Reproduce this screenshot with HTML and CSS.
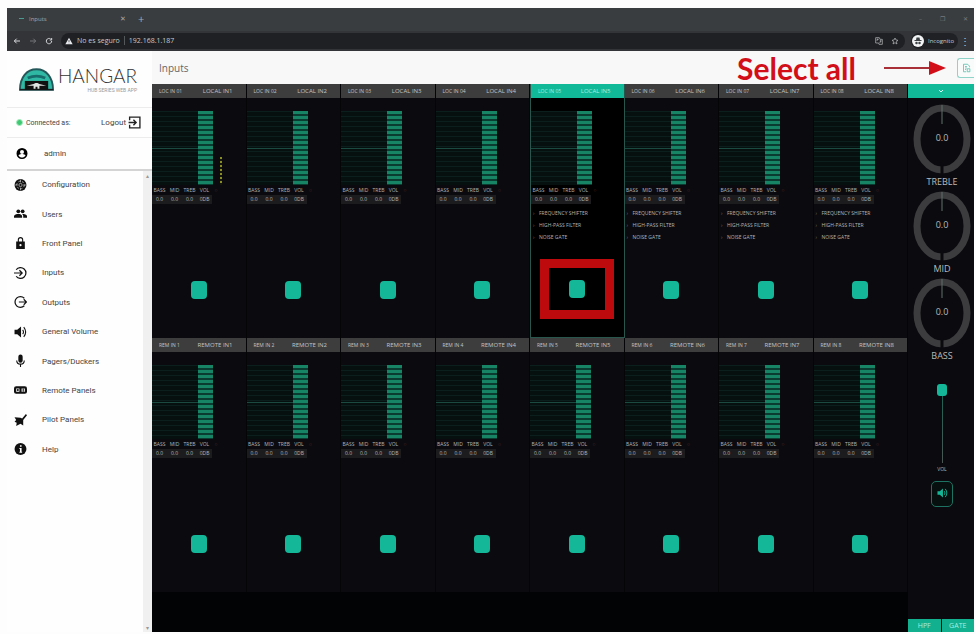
FILE: index.html
```
<!DOCTYPE html>
<html lang="en">
<head>
    <meta charset="UTF-8">
    <meta name="viewport" content="width=device-width, initial-scale=1.0">
    <title>Inputs</title>
    <link rel="stylesheet" href="styles.css">
</head>
<body>
    <div class="window">
        <!-- Browser bar -->
        <div class="tabs">
            <span class="tab-dash"></span>
            <span class="tab-title">Inputs</span>
            <span class="tab-close">✕</span>
            <span class="tab-new">+</span>
            <span class="win-buttons"><span>–</span><span>❐</span><span>✕</span></span>
        </div>
        <div class="toolbar">
            <svg class="nav-icon" viewBox="0 0 24 24"><path d="M21 12H4M11 5l-7 7 7 7"/></svg>
            <svg class="nav-icon dim" viewBox="0 0 24 24"><path d="M3 12h17M13 5l7 7-7 7"/></svg>
            <svg class="nav-icon" viewBox="0 0 24 24"><path d="M20 12a8 8 0 1 1-3-6M20 3v6h-6"/></svg>
            <div class="address">
                <svg class="warn" viewBox="0 0 24 24"><path d="M12 2L1 22h22zM11 9h2v6h-2zM11 17h2v2h-2z"/></svg>
                <span>No es seguro</span>
                <span class="bar"></span>
                <span>192.168.1.187</span>
                <svg class="addr-icon push" viewBox="0 0 24 24"><path d="M2 2h11l2 5h7v15H12l-1-4H2zM5 7h6M8 5c0 4-2 6-3 7M14 12h6M17 10c0 4-1 6-3 8"/></svg>
                <svg class="addr-icon" viewBox="0 0 24 24"><path d="M12 3l3 6 6 1-5 4 2 7-6-4-6 4 2-7-5-4 6-1z"/></svg>
            </div>
            <div class="incognito">
                <svg viewBox="0 0 24 24"><circle cx="12" cy="12" r="12" fill="#f1f3f4"/><path d="M8 10l1-5h6l1 5zM5 10h14v2H5z" fill="#3c4043"/><circle cx="9" cy="16" r="2.5" fill="#3c4043"/><circle cx="15" cy="16" r="2.5" fill="#3c4043"/></svg>
                <span>Incognito</span>
            </div>
            <span class="dots">⋮</span>
        </div>

        <div class="app">
            <!-- Sidebar -->
            <div class="sidebar">
                <div class="logo">
                    <svg class="logo-mark" viewBox="0 0 36 23">
                        <path d="M1 22C1 9 8 1 18 1s17 8 17 21z" fill="#2fb9a4" stroke="#24575a" stroke-width="2"/>
                        <path d="M9 10q9-4 18 0" fill="none" stroke="#176b6b" stroke-width="3"/>
                        <path d="M6 13h24v9H6z" fill="#111"/>
                        <path d="M8 18l7-2 2-1h2l2 1 7 2-7 0v3h-2v-2h-2v2h-2v-3z" fill="#dfe5e3"/>
                        <path d="M1 22h34" stroke="#111" stroke-width="1"/>
                    </svg>
                    <div class="logo-text">
                        <div class="logo-name">HANGAR</div>
                        <div class="logo-sub">HUB SERIES WEB APP</div>
                    </div>
                </div>
                <div class="connected">
                    <span class="status"></span>
                    <span>Connected as:</span>
                    <a class="logout" href="#">Logout
                        <svg viewBox="0 0 24 24"><path d="M3 8V2h19v20H3v-6M1 12h14M10 7l5 5-5 5" fill="none" stroke="#222" stroke-width="2.5"/></svg>
                    </a>
                </div>
                <div class="user">
                    <svg viewBox="0 0 24 24"><path d="M12 1a11 11 0 1 0 0 22 11 11 0 0 0 0-22zm0 4a4 4 0 1 1 0 8 4 4 0 0 1 0-8zm0 15c-3 0-5-1-7-4 0-2 5-3 7-3s7 1 7 3c-2 3-4 4-7 4z"/></svg>
                    <span>admin</span>
                </div>
                <div class="menu-scroll">
                    <ul class="menu">
                        <li><a href="#"><svg viewBox="0 0 24 24"><circle cx="12" cy="12" r="11"/><circle cx="12" cy="12" r="7" fill="none" stroke="#fff" stroke-dasharray="4 3"/><circle cx="12" cy="12" r="3" fill="none" stroke="#fff"/><path d="M12 2v5M12 17v5M2 12h5M17 12h5" stroke="#fff"/></svg>Configuration</a></li>
                        <li><a href="#"><svg viewBox="0 0 24 24"><circle cx="8" cy="7" r="3.5"/><circle cx="16" cy="7" r="3.5"/><path d="M0 19v-3c0-3 5-4 8-4s7 1 7 4v3zM17 19v-3c0-2-1-3-2-4 4 0 9 1 9 4v3z"/></svg>Users</a></li>
                        <li><a href="#"><svg viewBox="0 0 24 24"><path d="M4 9h16v14H4zM12 14a2 2 0 1 0 0 4 2 2 0 0 0 0-4z" fill-rule="evenodd"/><path d="M8 10V6a4 4 0 0 1 8 0v4" fill="none" stroke="#111" stroke-width="2"/></svg>Front Panel</a></li>
                        <li><a href="#"><svg viewBox="0 0 24 24"><path d="M4 6a10 10 0 1 1 0 12M0 12h15M10 7l5 5-5 5" fill="none" stroke="#111" stroke-width="2.3"/></svg>Inputs</a></li>
                        <li><a href="#"><svg viewBox="0 0 24 24"><path d="M19 5a10 10 0 1 0 0 14M9 12h14M18 7l5 5-5 5" fill="none" stroke="#111" stroke-width="2.3"/></svg>Outputs</a></li>
                        <li><a href="#"><svg viewBox="0 0 24 24"><path d="M1 8v8h5l7 6V2L6 8z"/><path d="M16 8q3 4 0 8M18 3q7 9 0 18" fill="none" stroke="#111" stroke-width="2"/></svg>General Volume</a></li>
                        <li><a href="#"><svg viewBox="0 0 24 24"><rect x="8" y="0" width="8" height="15" rx="4"/><path d="M5 11c0 9 14 9 14 0M12 17v6" fill="none" stroke="#111" stroke-width="2"/></svg>Pagers/Duckers</a></li>
                        <li><a href="#"><svg viewBox="0 0 24 24"><rect x="0" y="5" width="24" height="14" rx="4"/><path d="M4 9h6v6H4zM14 9h6v6h-6z" fill="#fff"/><circle cx="7" cy="12" r="2"/><path d="M16 9h2v6h-2z"/></svg>Remote Panels</a></li>
                        <li><a href="#"><svg viewBox="0 0 24 24"><path d="M1 7l11 1 3 1 7-8 2 2-7 9 0 10-5-3-8 4 1-6-4-2 3-3z"/></svg>Pilot Panels</a></li>
                        <li><a href="#"><svg viewBox="0 0 24 24"><circle cx="12" cy="12" r="11"/><path d="M11 5h3v3h-3zM10 10h4v7h1v2h-5v-2h1v-5h-1z" fill="#fff"/></svg>Help</a></li>
                    </ul>
                    <div class="scrollbar"><span>▴</span><span>▾</span></div>
                </div>
            </div>

            <!-- Main -->
            <div class="main">
                <div class="title-bar">
                    <h1>Inputs</h1>
                    <div class="note">
                        <span>Select all</span>
                        <svg viewBox="0 0 62 16"><path d="M0 8h46" stroke="#a93036" stroke-width="2"/><path d="M45 1l17 7-17 7z" fill="#d20f18"/></svg>
                    </div>
                    <button class="select-all" type="button" aria-label="Select all">
                        <svg viewBox="0 0 24 24"><path d="M20 10V7l-5-5H4v20h7M8 8h5M8 12h5M8 16h3M14 14h7v8h-7z"/></svg>
                    </button>
                </div>
                <div class="mixer">
                    <div class="racks">
                        <div class="rack" id="local"></div>
                        <div class="rack" id="remote"></div>
                    </div>
                    <div class="controls">
                        <button class="collapse" type="button" aria-label="Collapse">
                            <svg viewBox="0 0 10 6"><path d="M3 2l2 2 2-2"/></svg>
                        </button>
                        <div id="knobs"></div>
                        <input class="volume" id="volume" type="range" min="0" max="100" value="100">
                        <label class="volume-label" for="volume">VOL</label>
                        <button class="mute" type="button" aria-label="Mute">
                            <svg viewBox="0 0 24 24"><path d="M1 8v8h5l7 6V2L6 8z" fill="#16b596"/><path d="M16 8q3 4 0 8M18 3q7 9 0 18" fill="none" stroke="#16b596" stroke-width="2"/></svg>
                        </button>
                        <div class="filters">
                            <button type="button">HPF</button>
                            <button type="button">GATE</button>
                        </div>
                    </div>
                </div>
            </div>
        </div>
    </div>
    <script src="script.js"></script>
</body>
</html>
```
FILE: styles.css
```
* {
    box-sizing: border-box;
}
body {
    margin: 0;
    background: #fdfdfd;
    font-family: "Open Sans", "Noto Sans", sans-serif;
    color: #444;
}
button {
    padding: 0;
    border: 0;
    font-family: inherit;
    cursor: pointer;
}
a {
    color: inherit;
    text-decoration: none;
}
.window {
    display: flex;
    flex-direction: column;
    min-height: 100vh;
    padding: 8px 2px 2px 7px;
}

/* Browser bar */
.tabs {
    display: flex;
    align-items: center;
    height: 23px;
    padding: 0 6px 2px 12px;
    background: #3a3d40;
    color: #a5a8aa;
    font-size: 6px;
}
.tab-dash {
    width: 5px;
    height: 1px;
    margin-right: 5px;
    background: #4c9a90;
}
.tab-title {
    width: 91px;
}
.tab-close {
    width: 18px;
    font-size: 7px;
}
.tab-new {
    font-size: 11px;
}
.win-buttons {
    display: flex;
    gap: 18px;
    margin-left: auto;
    color: #777a7d;
}
.toolbar {
    display: flex;
    align-items: center;
    height: 20px;
    padding: 0 4px 1px 6px;
    background: #323438;
    color: #c6c8ca;
    font-size: 7px;
}
.toolbar span {
    white-space: nowrap;
}
.nav-icon {
    width: 8px;
    height: 8px;
    margin-right: 8px;
    fill: none;
    stroke: #d5d7d9;
    stroke-width: 3;
}
.dim {
    opacity: 0.4;
}
.address {
    flex: 1;
    display: flex;
    align-items: center;
    height: 16px;
    padding: 0 6px 0 4px;
    border-radius: 8px;
    background: #1f2023;
}
.warn {
    width: 8px;
    height: 8px;
    margin-right: 4px;
    fill: #e8eaed;
    fill-rule: evenodd;
}
.bar {
    width: 1px;
    height: 9px;
    margin: 0 4px;
    background: #55585b;
}
.addr-icon {
    width: 8px;
    height: 8px;
    margin-left: 8px;
    fill: none;
    stroke: #c0c2c4;
    stroke-width: 2;
}
.push {
    margin-left: auto;
}
.incognito {
    display: flex;
    align-items: center;
    gap: 4px;
    height: 16px;
    padding: 0 4px 0 1px;
    margin-left: 6px;
    border-radius: 8px;
    background: #202124;
    font-size: 6px;
}
.incognito svg {
    width: 12px;
    height: 12px;
}
.dots {
    margin-left: 2px;
    font-size: 10px;
}

/* Sidebar */
.app {
    flex: 1;
    display: flex;
}
.sidebar {
    display: flex;
    flex-direction: column;
    width: 145px;
    background: #fefefe;
    font-family: Roboto, sans-serif;
    font-size: 8px;
}
.logo {
    display: flex;
    gap: 4px;
    height: 57px;
    padding: 13px 0 0 12px;
    border-bottom: 1px solid #ececec;
}
.logo-mark {
    width: 35px;
    height: 23px;
    margin-top: 4px;
}
.logo-name {
    font-family: Lato, sans-serif;
    font-weight: 300;
    font-size: 19px;
    line-height: 23px;
    color: #333;
}
.logo-sub {
    font-size: 5px;
    line-height: 6px;
    text-align: right;
    color: #999;
}
.connected {
    display: flex;
    align-items: center;
    height: 30px;
    padding: 0 11px 0 9px;
    border-bottom: 1px solid #ececec;
    font-size: 7px;
}
.status {
    width: 7px;
    height: 7px;
    margin-right: 3px;
    border: 1px solid #a7ecc0;
    border-radius: 50%;
    background: #3fc872;
}
.logout {
    display: flex;
    align-items: center;
    gap: 2px;
    margin-left: auto;
    font-size: 8px;
}
.logout svg {
    width: 13px;
    height: 13px;
}
.user {
    display: flex;
    align-items: center;
    gap: 16px;
    height: 33px;
    border-bottom: 2px solid #d4d4d4;
    padding-left: 9px;
}
.user svg {
    width: 12px;
    height: 13px;
}
.menu-scroll {
    flex: 1;
    display: flex;
}
.menu {
    flex: 1;
    display: grid;
    grid-auto-rows: 1fr;
    height: 294px;
    margin: 0;
    padding: 0 0 0 7px;
    list-style: none;
}
.menu a {
    display: flex;
    align-items: center;
    gap: 15px;
    height: 100%;
    padding-bottom: 2px;
}
.menu svg {
    width: 13px;
    height: 14px;
    fill: #111;
}
.scrollbar {
    display: flex;
    flex-direction: column;
    justify-content: space-between;
    align-items: center;
    width: 9px;
    background: #f0f0f0;
    font-size: 6px;
    line-height: 9px;
    color: #999;
}

/* Main */
.main {
    flex: 1;
    display: flex;
    flex-direction: column;
}
.title-bar {
    display: flex;
    align-items: center;
    height: 33px;
    padding-left: 7px;
    background: #f8f8f8;
}
.title-bar h1 {
    margin: 0;
    font-size: 10px;
    font-weight: normal;
    color: #666;
}
.note {
    display: flex;
    align-items: center;
    gap: 28px;
    margin-left: auto;
    font-family: Lato, sans-serif;
    font-weight: bold;
    font-size: 30px;
    line-height: 30px;
    color: #d20f18;
}
.note svg {
    width: 62px;
    height: 16px;
}
.select-all {
    width: 17px;
    height: 20px;
    margin-left: 11px;
    border: 1px solid #8fd3c8;
    border-right: 0;
    border-radius: 3px 0 0 3px;
    background: #f8fbfa;
}
.select-all svg {
    width: 9px;
    height: 10px;
    fill: none;
    stroke: #4fb9a8;
    stroke-width: 2;
}
.mixer {
    flex: 1;
    display: flex;
    background: #010305;
}
.racks {
    flex: 1;
}
.rack {
    display: grid;
    grid-template-columns: repeat(8, 1fr);
}
.channel {
    display: flex;
    flex-direction: column;
    height: 254px;
    border-right: 1px solid #050507;
    background: #0b0b0f;
    color: #b5b5b5;
}
.channel-head {
    display: flex;
    align-items: center;
    justify-content: space-between;
    height: 14px;
    padding: 0 13px 0 7px;
    background: #3d3d3e;
    color: #c4c4c4;
    font-size: 6px;
    white-space: nowrap;
}
.channel-id {
    font-size: 5px;
}
.selected {
    border: 1px solid #28564c;
    border-top: 0;
    background: #000;
}
.selected .channel-head {
    background: #12b998;
    color: #a5efe0;
}
.eq {
    display: flex;
    height: 74px;
    margin-top: 13px;
}
.graph {
    position: relative;
    width: 46px;
    background: repeating-linear-gradient(#0b1f1c 0 1px, #06100f 1px 5px);
}
.graph::after {
    content: "";
    position: absolute;
    top: 50%;
    left: 0;
    width: 100%;
    height: 1px;
    background: #1b4a40;
}
.level {
    width: 15px;
    background: repeating-linear-gradient(#188466 0 3px, #0a3c32 3px 5px);
}
.meter {
    align-self: flex-end;
    width: 2px;
    height: 28px;
    margin-left: 7px;
    background: repeating-linear-gradient(#8a8f22 0 2px, #15170a 2px 4px);
}
.bands {
    width: 68px;
    margin-top: 1px;
    border-collapse: collapse;
    table-layout: fixed;
    font-size: 5px;
    line-height: 9px;
    text-align: center;
}
.bands th, .bands td {
    width: 15px;
    padding: 0;
    font-weight: normal;
}
.bands td {
    background: #1c1c1f;
}
.bands .link {
    width: 8px;
    background: none;
    color: #6b3030;
}
.effects {
    margin: 3px 0 0;
    padding: 0 0 0 2px;
    list-style: none;
    font-size: 5px;
    line-height: 12px;
}
.effects li::before {
    content: "›";
    display: inline-block;
    width: 6px;
    color: #777;
}
.pad {
    width: 16px;
    height: 18px;
    margin: auto auto 39px;
    border-radius: 4px;
    background: #14b899;
}
.frame {
    position: relative;
    margin: auto auto 39px;
}
.frame::after {
    content: "";
    position: absolute;
    inset: -21px -29px;
    border: 9px solid #bd0a0d;
    pointer-events: none;
}
.frame .pad {
    display: block;
    margin: 0;
}

/* Right column */
.controls {
    display: flex;
    flex-direction: column;
    align-items: center;
    width: 66px;
    padding-left: 2px;
    background: #0b0b0f;
    color: #b9b9b9;
}
.collapse {
    align-self: flex-end;
    width: 66px;
    height: 14px;
    background: #12b998;
}
.collapse svg {
    display: block;
    width: 10px;
    height: 6px;
    margin: auto;
    fill: none;
    stroke: #d8fff6;
    stroke-width: 1;
}
#knobs {
    margin-top: 6px;
}
.knob {
    position: relative;
    height: 87px;
    font-size: 9px;
    line-height: 16px;
    text-align: center;
}
.knob svg {
    display: block;
    width: 58px;
    height: 70px;
}
.knob-value {
    position: absolute;
    top: 26px;
    left: 0;
    width: 100%;
}
.volume {
    appearance: none;
    writing-mode: vertical-lr;
    direction: rtl;
    width: 10px;
    height: 79px;
    margin: 19px 0 0;
    background: linear-gradient(#176453, #4b5654) center / 1px 100% no-repeat;
}
.volume::-webkit-slider-thumb {
    appearance: none;
    width: 10px;
    height: 12px;
    border-radius: 3px;
    background: #14b899;
}
.volume-label {
    font-size: 5px;
    line-height: 12px;
}
.mute {
    width: 22px;
    height: 26px;
    margin-top: 6px;
    border: 1px solid #1d7261;
    border-radius: 5px;
    background: #08100f;
}
.mute svg {
    width: 11px;
    height: 12px;
}
.filters {
    display: flex;
    align-self: flex-end;
    gap: 1px;
    width: 66px;
    margin-top: auto;
}
.filters button {
    flex: 1;
    height: 13px;
    background: #12b08f;
    color: #a5efe0;
    font-size: 7px;
}
```
FILE: script.js
```
const bands = ["BASS", "MID", "TREB", "VOL"];
const values = ["0.0", "0.0", "0.0", "0DB"];
const effects = ["FREQUENCY SHIFTER", "HIGH-PASS FILTER", "NOISE GATE"];

function channel(id, name, local, n) {
    const selected = local && n === 5;
    const meter = local && n === 1 ? '<div class="meter"></div>' : "";
    const list = local && n >= 5
        ? `<ul class="effects">${effects.map(e => `<li>${e}</li>`).join("")}</ul>` : "";
    let pad = `<button class="pad" type="button" aria-label="Select ${name}"></button>`;
    if (selected) {
        pad = `<div class="frame">${pad}</div>`;
    }
    return `
        <div class="channel ${selected ? "selected" : ""}">
            <div class="channel-head"><span class="channel-id">${id}</span><span>${name}</span></div>
            <div class="eq"><div class="graph"></div><div class="level"></div>${meter}</div>
            <table class="bands">
                <tr>${bands.map(b => `<th>${b}</th>`).join("")}<th class="link">○</th></tr>
                <tr>${values.map(v => `<td>${v}</td>`).join("")}<td class="link"></td></tr>
            </table>
            ${list}
            ${pad}
        </div>`;
}

let local = "";
let remote = "";
for (let n = 1; n <= 8; n++) {
    local += channel("LOC IN 0" + n, "LOCAL IN" + n, true, n);
    remote += channel("REM IN " + n, "REMOTE IN" + n, false, n);
}
document.getElementById("local").innerHTML = local;
document.getElementById("remote").innerHTML = remote;

// Knobs
document.getElementById("knobs").innerHTML = ["TREBLE", "MID", "BASS"].map(name => `
    <div class="knob">
        <svg viewBox="0 0 58 70">
            <ellipse cx="29" cy="35" rx="25" ry="31" fill="none" stroke="#3c3c3f" stroke-width="7"/>
            <path d="M29 60v10" stroke="#0b0b0f" stroke-width="3"/>
            <path d="M29 1v19" stroke="#60706c" stroke-width="1"/>
        </svg>
        <span class="knob-value">0.0</span>
        <div>${name}</div>
    </div>`).join("");
```
